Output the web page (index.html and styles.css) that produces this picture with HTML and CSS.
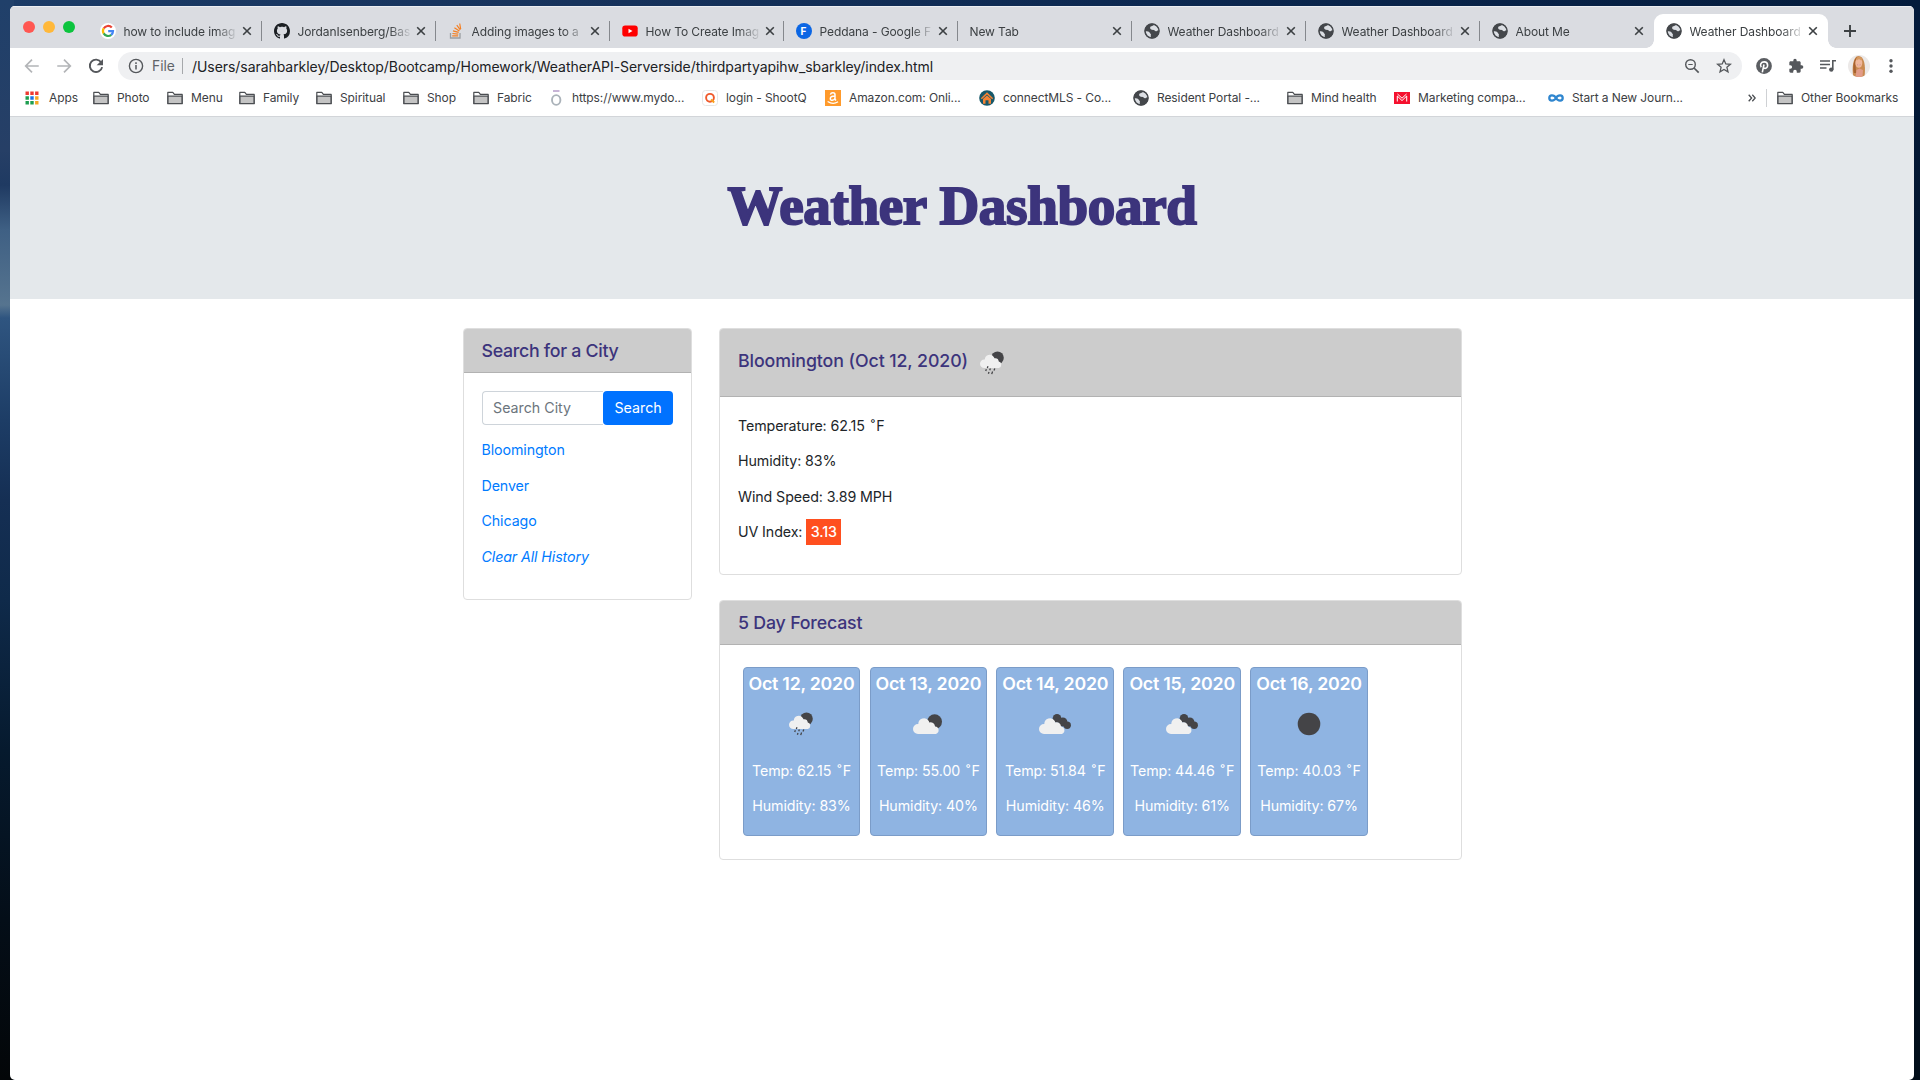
FILE: index.html
```html
<!DOCTYPE html>
<html lang="en">
<head>
<meta charset="utf-8">
<title>Weather Dashboard</title>
<link rel="stylesheet" href="styles.css">
</head>
<body>
<svg class="defs" width="0" height="0" aria-hidden="true">
  <symbol id="globe" viewBox="0 0 16 16"><circle cx="8" cy="8" r="7.400" fill="#44474b"/><path d="M1 8.600c1.500-.4 3.200-.3 4.200.5.700.6.500 1.300 1.300 1.700.7.400.4 1.300.2 2l.4 2.300C3.800 15 1.200 12.200 1 8.600zM6.200 4.300c.3-1.300 2-1 2.800-1.700l1.600-.9c2.300.9 4.200 3 4.600 5.600-.8.500-1.700 0-2.300.7-.8.700-2 .3-2.500-.7-.5-.8-2.200-.3-3.200-.9-.9-.5-1.300-1.200-1-2.100z" fill="#dcdfe4"/><circle cx="8" cy="8" r="7" fill="none" stroke="#44474b" stroke-width="1.500"/></symbol>
  <symbol id="folder" viewBox="0 0 16 14"><path d="M.8 12.500V1.400h5l1.600 2h7.800v9.100z" fill="#fff" stroke="#4b4e52" stroke-width="1.200" stroke-linejoin="round"/><path d="M1 5.200h14v7.500H1z" fill="#c4c4c4" stroke="#4b4e52" stroke-width="1.200"/></symbol>
  <symbol id="close" viewBox="0 0 10 10"><path d="M1.200 1.200l7.600 7.600M8.800 1.200L1.200 8.800" stroke="#3c4043" stroke-width="1.600"/></symbol>
  <symbol id="rain" viewBox="0 0 24 24"><circle cx="17.500" cy="6.700" r="6.300" fill="#444447"/><path d="M4.300 17a4.300 4.300 0 0 1 0-8.600h.5a4.900 4.900 0 0 1 9-2.300l.7 1.200a3.800 3.800 0 0 1 4.300 3.300 3.300 3.300 0 0 1 0 6.400z" fill="#f0f0f0"/><g stroke="#444447" stroke-width="1.300"><path d="M8 15.300l-.7 1.600M6.400 18.300l-.7 1.800M10.400 17.500l-.7 1.700M9 21l-.6 1.800M12.600 20.500l-.9 2.600M14.800 17.600l-.8 1.900"/></g></symbol>
  <symbol id="broken" viewBox="0 0 32 20"><circle cx="18" cy="4.400" r="4.300" fill="#444447"/><circle cx="23.800" cy="8" r="4.600" fill="#444447"/><circle cx="28.200" cy="11.200" r="3.700" fill="#444447"/><path d="M5 20a5 5 0 0 1 0-10h.3a5.700 5.700 0 0 1 10.500-3.100l.5 1.500a4.700 4.700 0 0 1 5.800 4 3.900 3.900 0 0 1 .5 7.600z" fill="#f0f0f0"/></symbol>
  <symbol id="few" viewBox="0 0 30 20"><circle cx="21.600" cy="7.700" r="7.400" fill="#444447"/><path d="M5 20a5 5 0 0 1 0-10h.3a5.700 5.700 0 0 1 10.500-3.100l.5 1.500a4.700 4.700 0 0 1 5.800 4 3.900 3.900 0 0 1 .8 7.600z" fill="#f0f0f0"/></symbol>
</svg>
<div class="window">
  <div class="tabstrip">
    <div class="lights"><i class="red"></i><i class="amber"></i><i class="green"></i></div>
    <div class="tab"><svg class="fav" viewBox="0 0 16 16"><circle cx="8" cy="8" r="8" fill="#fff"/><g fill="none" stroke-width="2.200"><path d="M11.800 4.600A5 5 0 0 0 3.700 5.600" stroke="#ea4335"/><path d="M3.700 5.400a5 5 0 0 0 0 5.200" stroke="#fbbc05"/><path d="M3.700 10.400a5 5 0 0 0 7.600 1.400" stroke="#34a853"/><path d="M11.200 11.900A5 5 0 0 0 13 8.200H8.200" stroke="#4285f4"/></g></svg><span class="tab-title">how to include imag</span><svg class="x"><use href="#close"/></svg></div>
    <div class="tab"><svg class="fav" viewBox="0 0 16 16"><path fill="#1b1f23" d="M8 0C3.580 0 0 3.580 0 8c0 3.540 2.290 6.530 5.470 7.590.4.070.55-.17.55-.38 0-.19-.01-.82-.01-1.490-2.010.37-2.530-.49-2.690-.94-.09-.23-.48-.94-.82-1.130-.28-.15-.68-.52-.01-.53.63-.01 1.080.58 1.230.82.72 1.210 1.870.87 2.330.66.070-.52.28-.87.51-1.070-1.780-.2-3.640-.89-3.640-3.950 0-.87.31-1.590.82-2.150-.08-.2-.36-1.020.08-2.120 0 0 .67-.21 2.200.82.64-.18 1.320-.27 2-.27s1.360.09 2 .27c1.530-1.040 2.200-.82 2.200-.82.44 1.100.16 1.920.08 2.120.51.56.82 1.270.82 2.150 0 3.070-1.870 3.750-3.650 3.950.29.25.54.73.54 1.480 0 1.070-.01 1.930-.01 2.200 0 .21.15.46.55.38A8.010 8.010 0 0 0 16 8c0-4.420-3.580-8-8-8z"/></svg><span class="tab-title">JordanIsenberg/Bas</span><svg class="x"><use href="#close"/></svg></div>
    <div class="tab"><svg class="fav" viewBox="0 0 16 16"><path d="M2.500 10v5h9.500v-5" fill="none" stroke="#9a9da1" stroke-width="1.300"/><path d="M4.200 12.900h6M4.400 10.500l5.900.7M5 7.800l5.700 1.600M6.400 4.800l5 3.200M8.800 2.200l3.500 4.700M11.700.5l1 5.700" stroke="#f48024" stroke-width="1.200"/></svg><span class="tab-title">Adding images to a</span><svg class="x"><use href="#close"/></svg></div>
    <div class="tab"><svg class="fav" viewBox="0 0 16 16"><rect x=".3" y="2.400" width="15.400" height="11.200" rx="2.800" fill="#f00"/><path d="M6.500 5.700v4.600l4-2.300z" fill="#fff"/></svg><span class="tab-title">How To Create Imag</span><svg class="x"><use href="#close"/></svg></div>
    <div class="tab"><span class="fav font-badge">F</span><span class="tab-title">Peddana - Google F</span><svg class="x"><use href="#close"/></svg></div>
    <div class="tab"><span class="tab-title">New Tab</span><svg class="x"><use href="#close"/></svg></div>
    <div class="tab"><svg class="fav"><use href="#globe"/></svg><span class="tab-title">Weather Dashboard</span><svg class="x"><use href="#close"/></svg></div>
    <div class="tab"><svg class="fav"><use href="#globe"/></svg><span class="tab-title">Weather Dashboard</span><svg class="x"><use href="#close"/></svg></div>
    <div class="tab last"><svg class="fav"><use href="#globe"/></svg><span class="tab-title">About Me</span><svg class="x"><use href="#close"/></svg></div>
    <div class="tab active"><svg class="fav"><use href="#globe"/></svg><span class="tab-title">Weather Dashboard</span><svg class="x"><use href="#close"/></svg></div>
    <svg class="plus" viewBox="0 0 14 14"><path d="M7 1v12M1 7h12" stroke="#3c4043" stroke-width="1.900"/></svg>
  </div>

  <div class="toolbar">
    <svg class="tool" viewBox="0 0 20 20"><path d="M17.500 10H3.500M10 3L3 10l7 7" fill="none" stroke="#b3b5b8" stroke-width="1.900"/></svg>
    <svg class="tool" viewBox="0 0 20 20"><path d="M2.500 10h14M10 3l7 7-7 7" fill="none" stroke="#b3b5b8" stroke-width="1.900"/></svg>
    <svg class="tool" viewBox="0 0 20 20"><path d="M15.800 6A6.900 6.900 0 1 0 16.800 11.200" fill="none" stroke="#55585c" stroke-width="2.100"/><path d="M17.800 2.200v7.100h-7.100z" fill="#55585c"/></svg>
    <div class="omnibox">
      <svg class="info" viewBox="0 0 16 16"><circle cx="8" cy="8" r="6.600" fill="none" stroke="#55585c" stroke-width="1.400"/><path d="M8 7v4.400M8 4.300v1.600" stroke="#55585c" stroke-width="1.500"/></svg>
      <span class="scheme">File</span>
      <span class="url">/Users/sarahbarkley/Desktop/Bootcamp/Homework/WeatherAPI-Serverside/thirdpartyapihw_sbarkley/index.html</span>
      <svg class="omni-icon" viewBox="0 0 16 16"><circle cx="6.500" cy="6.500" r="4.800" fill="none" stroke="#55585c" stroke-width="1.400"/><path d="M10 10l4.700 4.700" stroke="#55585c" stroke-width="1.700"/><path d="M4.300 6.500h4.400" stroke="#55585c" stroke-width="1.100"/></svg>
      <svg class="omni-icon" viewBox="0 0 16 16"><path d="M8 1.700l1.800 4.200 4.600.4-3.500 3 1.100 4.500L8 11.400l-4 2.400 1.100-4.500-3.500-3 4.600-.4z" fill="none" stroke="#55585c" stroke-width="1.300"/></svg>
    </div>
    <svg class="ext" viewBox="0 0 16 16"><circle cx="8" cy="8" r="7.900" fill="#5b5e62"/><path d="M6.300 14.300L8 6.500M5.200 9.300C3.600 6.800 5 3.900 8.200 3.900c4.600 0 4.200 6.500.9 6.500-1.100 0-1.700-.7-1.800-1.200" fill="none" stroke="#fff" stroke-width="1.600"/></svg>
    <svg class="ext" viewBox="0 0 24 24"><path fill="#55585c" d="M20.500 11H19V7c0-1.100-.9-2-2-2h-4V3.500a2.500 2.500 0 0 0-5 0V5H4c-1.100 0-2 .9-2 2v3.800h1.500a2.700 2.700 0 0 1 0 5.400H2V20c0 1.100.9 2 2 2h3.800v-1.500a2.700 2.700 0 0 1 5.400 0V22H17c1.100 0 2-.9 2-2v-4h1.500a2.500 2.500 0 0 0 0-5z"/></svg>
    <svg class="ext" viewBox="0 0 16 16"><path d="M0 3h10M0 6.500h10M0 10h6.500" stroke="#55585c" stroke-width="1.600"/><path d="M12.800 11.500V2.800H16" fill="none" stroke="#55585c" stroke-width="1.600"/><circle cx="11.300" cy="11.600" r="2.200" fill="#55585c"/></svg>
    <svg class="avatar" viewBox="0 0 22 22"><clipPath id="face"><circle cx="11" cy="11" r="11"/></clipPath><g clip-path="url(#face)"><path d="M0 0h22v22H0z" fill="#ece9e8"/><path d="M5.500 22C3.500 14 5 1 10.500 1s7.500 9 6 21z" fill="#c98a50"/><path d="M5.800 18C4.500 11 6 4 9 2c-2 4-1.500 11-.5 16z" fill="#a8622f"/><ellipse cx="10.800" cy="8" rx="3.500" ry="4.800" fill="#efb79b"/><path d="M9 5.500q1.800-2.500 4 0L14 3 10.500 1.500 8 4z" fill="#d79a60"/><path d="M9 9.600q1.800 2.200 3.600 0z" fill="#fff" stroke="#c96f62" stroke-width=".4"/><path d="M7.500 22l1-7 3-1.500 3.500 1.500-.5 7z" fill="#e29b88"/></g></svg>
    <svg class="ext" viewBox="0 0 16 16"><g fill="#55585c"><circle cx="8" cy="2.700" r="1.700"/><circle cx="8" cy="8" r="1.700"/><circle cx="8" cy="13.300" r="1.700"/></g></svg>
  </div>

  <div class="bookmarks">
    <div class="bm"><svg class="apps" viewBox="0 0 16 16"><path d="M1.500 1.500h3.400v3.400H1.500zM6.300 1.500h3.400v3.400H6.300zM11.100 1.500h3.400v3.400h-3.400z" fill="#ee3a32"/><path d="M1.500 6.300h3.400v3.400H1.500zM1.500 11.100h3.400v3.400H1.500zM6.300 11.100h3.400v3.400H6.300z" fill="#1e9e50"/><path d="M6.300 6.300h3.400v3.400H6.300z" fill="#1a73e8"/><path d="M11.100 6.300h3.400v3.400h-3.400zM11.100 11.100h3.400v3.400h-3.400z" fill="#f5a623"/></svg>Apps</div>
    <div class="bm"><svg><use href="#folder"/></svg>Photo</div>
    <div class="bm"><svg><use href="#folder"/></svg>Menu</div>
    <div class="bm"><svg><use href="#folder"/></svg>Family</div>
    <div class="bm"><svg><use href="#folder"/></svg>Spiritual</div>
    <div class="bm"><svg><use href="#folder"/></svg>Shop</div>
    <div class="bm"><svg><use href="#folder"/></svg>Fabric</div>
    <div class="bm"><svg viewBox="0 0 16 16"><path d="M5 1h6.500" stroke="#b49bc8" stroke-width="1.700"/><ellipse cx="8.200" cy="10" rx="4.200" ry="4.900" fill="none" stroke="#abb3ba" stroke-width="1.900"/></svg>https://www.mydo...</div>
    <div class="bm"><svg viewBox="0 0 16 16"><rect x=".5" y=".5" width="15" height="15" rx="3" fill="#fff" stroke="#e6e6e6"/><circle cx="8" cy="7.800" r="3.900" fill="none" stroke="#f0592b" stroke-width="1.900"/><path d="M9 9.500l3.200 3" stroke="#f9a01b" stroke-width="1.900"/></svg>login - ShootQ</div>
    <div class="bm"><svg class="amazon" viewBox="0 0 16 16"><path d="M0 0h16v16H0z" fill="#ff9a2b"/><path d="M5.400 4.600C6 2.300 10 2.200 10 4.800v4.400l1 1.200M10 6C7 6 5.300 6.800 5.300 8.700c0 2.300 3.800 2.300 4.700-.6" fill="none" stroke="#fff" stroke-width="1.500"/><path d="M2.600 11.500q5.400 3.600 10.500.3" fill="none" stroke="#fff" stroke-width="1.200"/></svg>Amazon.com: Onli...</div>
    <div class="bm"><svg viewBox="0 0 16 16"><circle cx="8" cy="8" r="7.800" fill="#17586a"/><path d="M1.800 8.300L8 2.200l6.200 6.100-1 1L8 4.500 2.800 9.300zM4 9.100l4-3.700 4 3.700v4.700H9.500v-3.500h-3v3.500H4z" fill="#f58233"/></svg>connectMLS - Co...</div>
    <div class="bm"><svg><use href="#globe"/></svg>Resident Portal -...</div>
    <div class="bm"><svg><use href="#folder"/></svg>Mind health</div>
    <div class="bm"><svg viewBox="0 0 16 16"><path d="M0 2h16v12H0z" fill="#f5102e"/><path d="M3.300 11.500V6l4.700 4.600L12.700 6v5.500M3.500 4l4.500 4.200L12.500 4" fill="none" stroke="#fff" stroke-width="1"/></svg>Marketing compa...</div>
    <div class="bm"><svg viewBox="0 0 16 16"><path d="M8 8C5.900 4.400 1.300 4.700 1.300 8S5.900 11.600 8 8s6.700-3.300 6.700 0S10.100 11.600 8 8z" fill="none" stroke="#2f86cf" stroke-width="2.300"/></svg>Start a New Journ...</div>
    <div class="more"><svg viewBox="0 0 8 8"><path d="M.7.8L3.600 4 .7 7.200M4.300.8L7.200 4 4.300 7.200" fill="none" stroke="#4b4e52" stroke-width="1.300"/></svg></div>
    <div class="bm other"><svg><use href="#folder"/></svg>Other Bookmarks</div>
  </div>

  <main class="page">
    <header class="jumbotron"><h1>Weather Dashboard</h1></header>
    <div class="content">
      <section class="card search">
        <h5 class="card-header">Search for a City</h5>
        <div class="card-body">
          <div class="group"><input type="text" placeholder="Search City"><button>Search</button></div>
          <p><a>Bloomington</a></p><p><a>Denver</a></p><p><a>Chicago</a></p><p><a class="clear">Clear All History</a></p>
        </div>
      </section>
      <div class="results">
        <section class="card current">
          <h5 class="card-header tall">Bloomington (Oct 12, 2020)<svg class="now"><use href="#rain"/></svg></h5>
          <div class="card-body">
            <p>Temperature: 62.15 <span class="deg">˚</span>F</p><p>Humidity: 83%</p><p>Wind Speed: 3.89 MPH</p><p>UV Index: <span class="uv">3.13</span></p>
          </div>
        </section>
        <section class="card forecast">
          <h5 class="card-header">5 Day Forecast</h5>
          <div class="days">
            <div class="day"><h5>Oct 12, 2020</h5><svg class="w-rain"><use href="#rain"/></svg><p>Temp: 62.15 <span class="deg">˚</span>F</p><p>Humidity: 83%</p></div>
            <div class="day"><h5>Oct 13, 2020</h5><svg class="w-few"><use href="#few"/></svg><p>Temp: 55.00 <span class="deg">˚</span>F</p><p>Humidity: 40%</p></div>
            <div class="day"><h5>Oct 14, 2020</h5><svg class="w-broken"><use href="#broken"/></svg><p>Temp: 51.84 <span class="deg">˚</span>F</p><p>Humidity: 46%</p></div>
            <div class="day"><h5>Oct 15, 2020</h5><svg class="w-broken"><use href="#broken"/></svg><p>Temp: 44.46 <span class="deg">˚</span>F</p><p>Humidity: 61%</p></div>
            <div class="day"><h5>Oct 16, 2020</h5><svg class="w-clear" viewBox="0 0 24 24"><circle cx="12" cy="12" r="11.300" fill="#444447"/></svg><p>Temp: 40.03 <span class="deg">˚</span>F</p><p>Humidity: 67%</p></div>
          </div>
        </section>
      </div>
    </div>
  </main>
</div>
</body>
</html>
```
FILE: styles.css
```css
* { box-sizing: border-box; }
html, body { height: 100%; }
body {
  margin: 0;
  padding: 6px 6px 0 10px;
  overflow: hidden;
  font-family: Inter, "Liberation Sans", sans-serif;
  background:
    linear-gradient(180deg, #20406a 0, #263f66 150px, #1f3a62 185px, #3f6084 230px, #56748f 305px, #2f5580 318px, #1d3d66 420px, #152f54 500px, #0f2a4a 600px, #061a2e 750px, #040e18 920px, #030608 1080px) 0 0 / 14px 100% no-repeat,
    linear-gradient(180deg, #031b3c 0, #04152c 300px, #031226 700px, #020e1a 1080px) 100% 0 / 12px 100% no-repeat,
    linear-gradient(90deg, #1b3b66 0, #17335c 30%, #0c2850 60%, #031b3c 100%);
}
svg { display: block; flex: none; }
.defs { position: absolute; }
.window {
  height: 1074px;
  display: flex;
  flex-direction: column;
  border-radius: 5px;
  overflow: hidden;
  background: #fff;
}

/* Tab strip */
.tabstrip { height: 42px; display: flex; background: #dadce1; padding-top: 7px; flex: none; border-top: 1px solid #eceef2; }
.lights { width: 77.500px; display: flex; gap: 8px; padding: 7px 0 0 13px; }
.lights i { width: 12px; height: 12px; border-radius: 50%; }
.red { background: #ff5752; }
.amber { background: #ffb83a; }
.green { background: #0cc43e; }
.tab { width: 174px; height: 34px; display: flex; align-items: center; padding: 0 10px 0 12px; position: relative; font-size: 12px; letter-spacing: -0.1px; color: #3c4043; }
.tab:not(.last):not(.active)::after { content: ""; position: absolute; right: 0; top: 7px; width: 1px; height: 20px; background: #85888d; }
.fav { width: 16px; height: 16px; margin-right: 8px; flex: none; }
.font-badge { border-radius: 50%; background: #0b66e4; color: #fff; font-weight: 700; font-size: 10px; line-height: 16px; text-align: center; }
.tab-title { flex: 1; white-space: nowrap; margin-right: 6px; -webkit-mask-image: linear-gradient(90deg, #000 82%, transparent 102%); mask-image: linear-gradient(90deg, #000 82%, transparent 102%); }
.x { width: 10px; height: 10px; }
.active { background: #fff; border-radius: 9px 9px 0 0; }
.active::before, .active::after { content: ""; position: absolute; bottom: 0; width: 8px; height: 8px; }
.active::before { left: -8px; background: radial-gradient(circle at 0 0, transparent 7.500px, #fff 8px); }
.active::after { right: -8px; background: radial-gradient(circle at 100% 0, transparent 7.500px, #fff 8px); }
.plus { width: 14px; height: 14px; margin: 10px 0 0 15px; }

/* Toolbar */
.toolbar { height: 36px; flex: none; display: flex; align-items: center; padding: 0 14px 0 13px; }
.tool { width: 18px; height: 18px; margin-right: 14px; }
.omnibox { width: 1624px; height: 28px; margin: 0 14px 0 -1px; border-radius: 14px; background: #eff0f2; display: flex; align-items: center; padding: 0 10px; font-size: 14px; }
.info { width: 16px; height: 16px; }
.scheme { color: #5f6368; width: 31px; margin: 0 9px 0 8px; border-right: 1px solid #a6a8ab; line-height: 16px; font-size: 13.800px; }
.url { color: #202124; flex: 1; white-space: nowrap; letter-spacing: -0.055px; }
.omni-icon { width: 16px; height: 16px; margin-left: 16px; }
.ext { width: 16px; height: 16px; margin-right: 16px; }
.ext:last-child { margin-right: 0; }
.avatar { width: 22px; height: 22px; margin: 0 13px 0 -4px; }

/* Bookmarks */
.bookmarks {
  height: 33px; flex: none; padding: 0 15px 5px 15px; display: grid; align-items: center;
  grid-template-columns: 68px 74px 72px 77px 87px 70px 75px 154px 123px 154px 154px 154px 107px 154px 200px 18px 1fr;
  font-size: 12px; letter-spacing: -0.1px; color: #3c4043; border-bottom: 1px solid #d2d5d9;
}
.bm { display: flex; align-items: center; white-space: nowrap; }
.bm svg { width: 16px; height: 16px; margin-right: 8px; }
.bm .apps { margin: 0 9px 0 -1px; }
.more svg { width: 8px; height: 8px; }
.other { border-left: 1px solid #cfd1d4; padding-left: 10px; height: 18px; }

/* Dashboard page */
.page { font-size: 14.240px; line-height: 21.360px; letter-spacing: -0.1px; color: #212529; }
.jumbotron { height: 182px; background: #e4e8eb; text-align: center; }
h1, h5, p { margin: 0; }
h1 { font: 700 55px/66px "Liberation Serif", serif; color: #3c347c; padding-top: 56px; letter-spacing: -0.300px; -webkit-text-stroke: 2px #3c347c; }
.content { display: flex; padding: 29px 0 0 453px; gap: 27px; align-items: flex-start; }
.card { border: 1px solid #dedede; border-radius: 4px; background: #fff; overflow: hidden; }
.search { width: 229px; height: 272px; }
.results { width: 743px; display: flex; flex-direction: column; gap: 25px; }
.card-header { height: 44px; padding: 0 18px; background: #cccccc; border-bottom: 1px solid #b2b2b2; color: #3c347c; font-size: 17.800px; font-weight: 500; line-height: 43px; letter-spacing: -0.2px; display: flex; }
.search .card-header { padding-left: 17.500px; letter-spacing: -0.3px; }
.card-header.tall { height: 68px; line-height: 64px; letter-spacing: -0.1px; }
.now { width: 24px; height: 24px; margin: 22px 0 0 12px; }
.card-body { padding: 18px; }
.search .card-body { padding-left: 17.500px; }
.card-body p { margin-bottom: 14.240px; }
.group { display: flex; height: 34px; margin-bottom: 14.240px; }
.group input { width: 122px; min-width: 0; border: 1px solid #ced4da; border-right: 0; border-radius: 4px 0 0 4px; padding: 0 10.500px; font: inherit; }
.group input::placeholder { color: #6c757d; opacity: 1; }
.group button { width: 70px; border: 0; border-radius: 4px; background: #0072ff; color: #fff; font: inherit; padding: 0; }
a { color: #007bff; }
.clear { font-style: italic; }
.current { height: 247px; }
.current .card-body { padding-top: 17.600px; }
.deg { margin: 0 1.300px 0 2px; }
.uv { display: inline-block; background: #ff4f1f; color: #fff; font-weight: 500; padding: 2.500px 4.500px; margin: -3px 0; }
.forecast { height: 260px; }
.days { display: flex; gap: 9.300px; padding: 22px 22.700px; }
.day { width: 117.600px; height: 169px; border: 1px solid #7b9cc8; border-radius: 4px; background: #8fb4e2; color: #fff; display: flex; flex-direction: column; align-items: center; white-space: nowrap; }
.day h5 { font-size: 17.800px; font-weight: 600; line-height: 21.400px; height: 44px; padding-top: 5px; letter-spacing: -0.25px; }
.day svg { width: 24px; height: 24px; margin-bottom: 24px; }
.day p { margin-bottom: 13.800px; }
.day .w-few { width: 30px; height: 20px; margin: 2px 0 26px; }
.day .w-broken { width: 32px; height: 20px; margin: 2px 0 26px; }
```
